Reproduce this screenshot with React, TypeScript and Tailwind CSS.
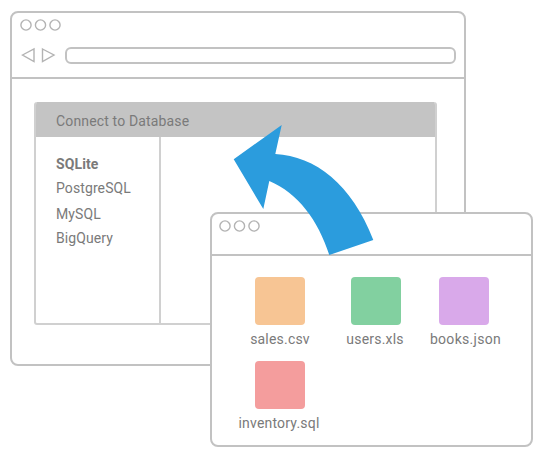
const font = "font-['Roboto',sans-serif]";

function Dots({ className }: { className: string }) {
  return (
    <svg width="42" height="12" viewBox="0 0 42 12" fill="none" stroke="#b3b3b3" strokeWidth="1.4" className={`block shrink-0 ${className}`}>
      <circle cx="6" cy="6" r="5.1" />
      <circle cx="20.5" cy="6" r="5.1" />
      <circle cx="35" cy="6" r="5.1" />
    </svg>
  );
}

function FileItem({ name, color, width, labelClass = "" }: { name: string; color: string; width: string; labelClass?: string }) {
  return (
    <div className={`flex flex-col items-center ${width}`}>
      <div className={`w-[50px] h-[48px] rounded-[4px] ${color}`} />
      <span className={`mt-[5px] text-[14px] leading-[18px] tracking-[0.2px] text-[#7a7a7a] whitespace-nowrap ${labelClass}`}>{name}</span>
    </div>
  );
}

export default function App() {
  return (
    <div className={`relative w-[548px] h-[461px] bg-white overflow-hidden ${font}`}>
      {/* Back window */}
      <div className="absolute left-[10px] top-[11px] w-[456px] h-[355px] rounded-[8px] border-2 border-[#c2c2c2] bg-white flex flex-col">
        <Dots className="ml-[8px] mt-[6px]" />
        <div className="flex items-center h-[16px] mt-[16px] ml-[9px] mr-[8px]">
          <svg width="35" height="16" viewBox="0 0 35 16" fill="none" stroke="#b3b3b3" strokeWidth="1.4" className="shrink-0">
            <path d="M1.5 8 L13 2 V14.5 Z" />
            <path d="M21.5 2 L33 8 L21.5 14.5 Z" />
          </svg>
          <div className="ml-[9px] flex-1 h-[17px] rounded-[6px] border-2 border-[#c2c2c2]" />
        </div>
        <div className="mt-[14px] border-t-2 border-[#c2c2c2]" />
        <div className="ml-[22px] mr-[27px] mt-[23px] h-[223px] rounded-[3px] border-2 border-[#d0d0d0] border-t-0 flex flex-col overflow-hidden">
          <div className="h-[35px] -mx-[2px] bg-[#c4c4c4] pl-[22px] pt-[4px] flex items-center text-[14px] tracking-[0.15px] text-[#7a7a7a] shrink-0">
            Connect to Database
          </div>
          <div className="flex flex-1">
            <div className="w-[125px] border-r-2 border-[#d0d0d0] pl-[20px] pt-[17px] text-[14px] text-[#7a7a7a] tracking-[0.1px] flex flex-col">
              <span className="font-bold leading-[20px]">SQLite</span>
              <span className="leading-[20px] mt-[4px]">PostgreSQL</span>
              <span className="leading-[20px] mt-[6px]">MySQL</span>
              <span className="leading-[20px] mt-[4px]">BigQuery</span>
            </div>
          </div>
        </div>
      </div>

      {/* Front window */}
      <div className="absolute left-[210px] top-[212px] w-[323px] h-[235px] rounded-[8px] border-2 border-[#c2c2c2] bg-white flex flex-col">
        <Dots className="ml-[7px] mt-[6px]" />
        <div className="mt-[22px] border-t-2 border-[#c2c2c2]" />
        <div className="pt-[21px] pl-[28px] flex flex-col gap-[13px]">
          <div className="flex">
            <FileItem name="sales.csv" color="bg-[#f7c594]" width="w-[80px]" />
            <FileItem name="users.xls" color="bg-[#82d0a0]" width="w-[80px] ml-[16px]" labelClass="mr-[2px]" />
            <FileItem name="books.json" color="bg-[#d9a9ea]" width="w-[80px] ml-[8px]" labelClass="ml-[3px] tracking-[0.3px]" />
          </div>
          <FileItem name="inventory.sql" color="bg-[#f49d9d]" width="w-[80px]" labelClass="mr-[2px]" />
        </div>
      </div>

      {/* Arrow */}
      <svg className="absolute left-0 top-0" width="548" height="461" viewBox="0 0 548 461">
        <path
          d="M233.7 159.3 L281.7 125 L275.3 154 C315 156 352 184 373.3 240 L329.3 255 C318 220 298 193 269.3 181 L263.3 209 Z"
          fill="#2b9cdd"
        />
      </svg>
    </div>
  );
}
